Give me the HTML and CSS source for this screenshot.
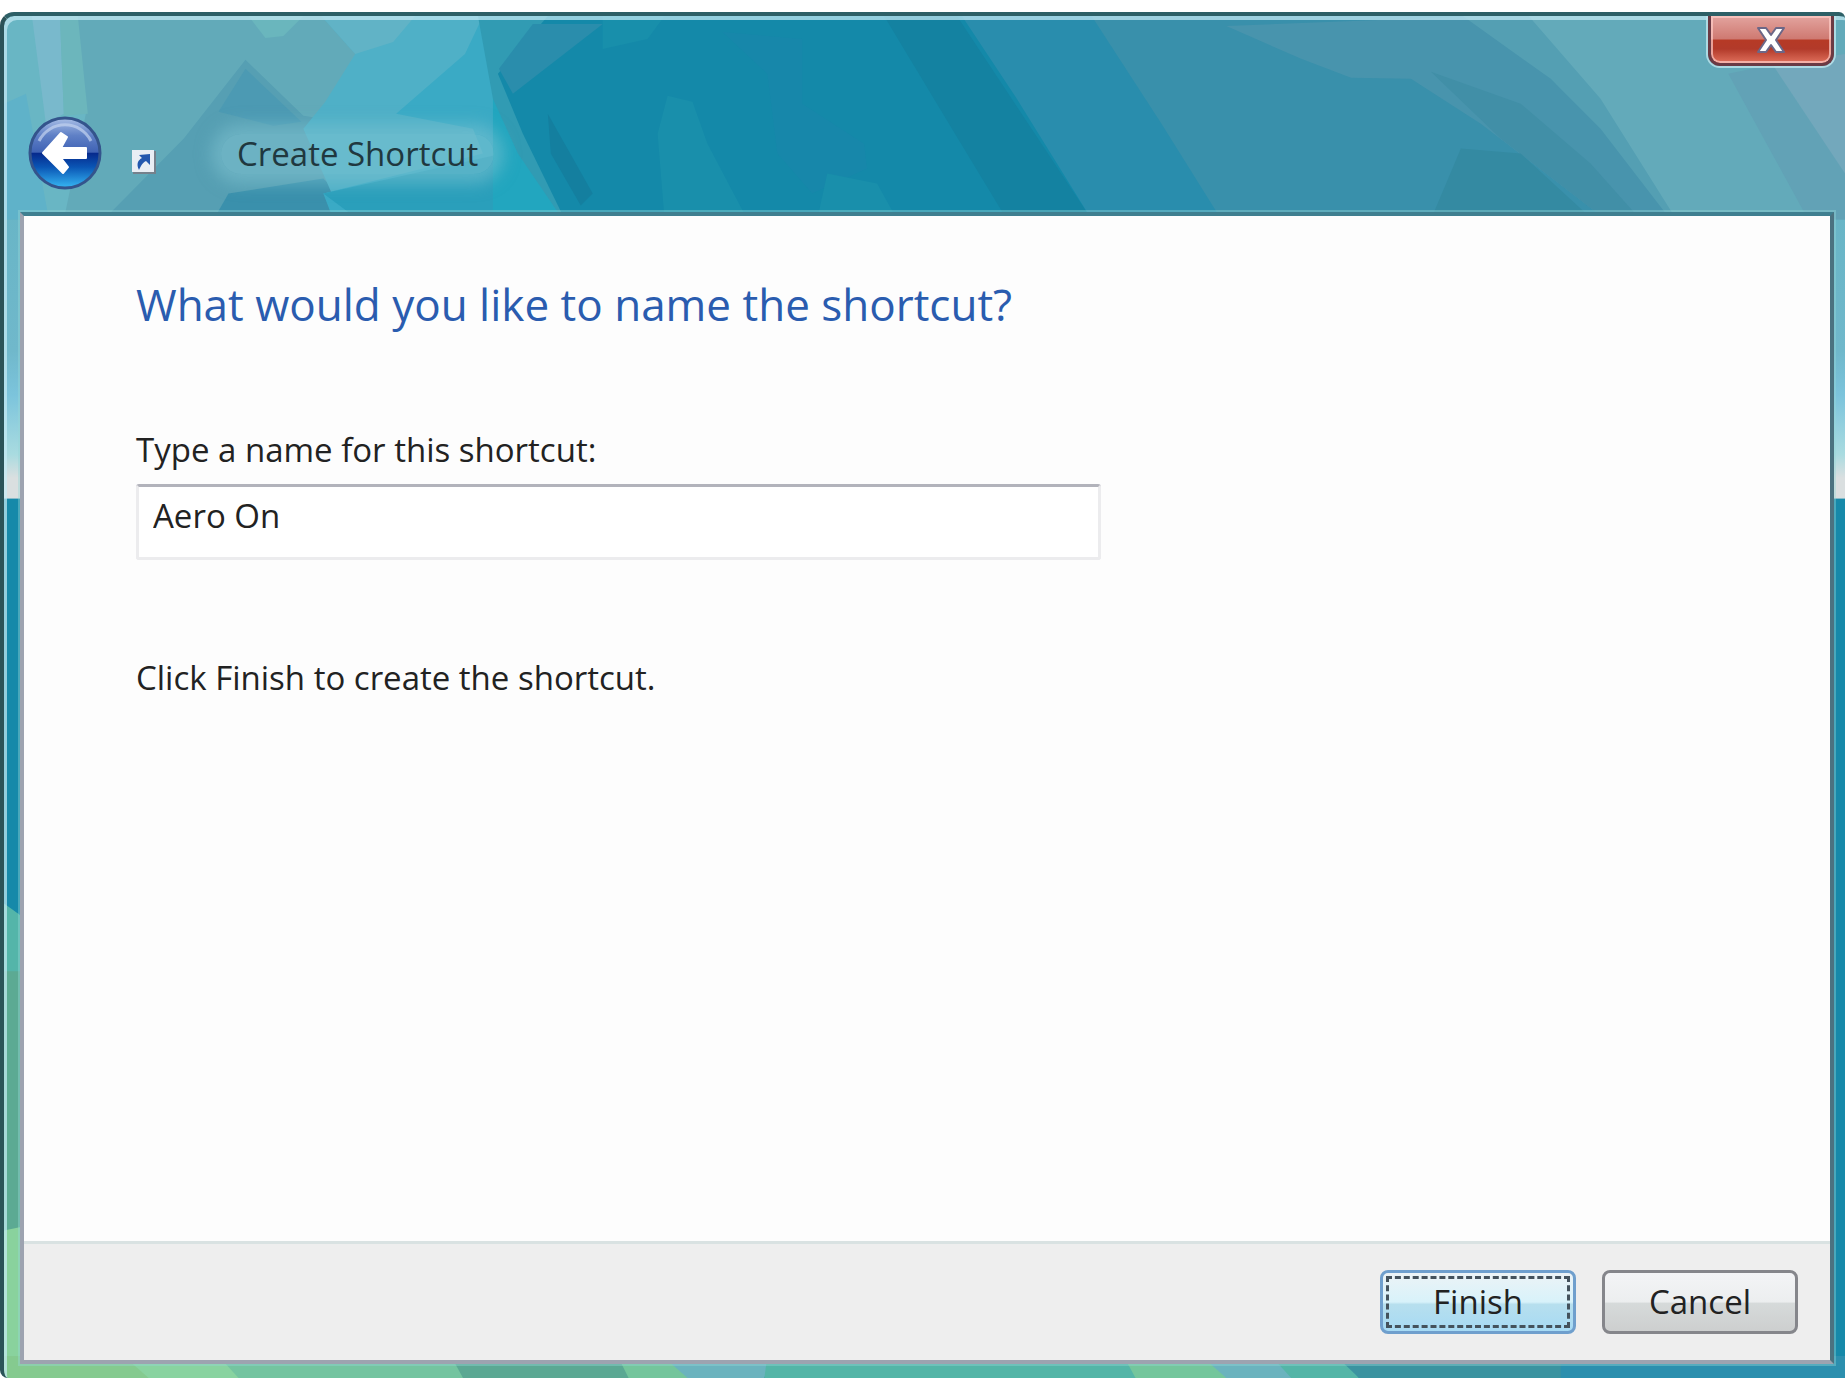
FILE: index.html
```html
<!DOCTYPE html>
<html lang="en">
<head>
    <meta charset="UTF-8">
    <meta name="viewport" content="width=device-width, initial-scale=1.0">
    <title>Create Shortcut</title>
    <link rel="stylesheet" href="styles.css">
</head>
<body>
    <div class="window">
        <!-- wallpaper seen through the glass frame -->
        <svg class="glass" viewBox="0 12 1845 1366" preserveAspectRatio="none" aria-hidden="true">
            <defs>
                <linearGradient id="side" x1="0" y1="0" x2="0" y2="1">
                    <stop offset="0" stop-color="#68b5c6"/>
                    <stop offset="0.5" stop-color="#70b8cb"/>
                    <stop offset="0.65" stop-color="#7cc4dc"/>
                    <stop offset="0.85" stop-color="#a9dbe0"/>
                    <stop offset="0.93" stop-color="#dadfe0"/>
                    <stop offset="1" stop-color="#dadfe0"/>
                </linearGradient>
            </defs>
            <rect x="0" y="12" width="1845" height="1366" fill="#1689a9"/>
            <rect x="0" y="200" width="1845" height="296" fill="url(#side)"/>
            <!-- title bar -->
            <rect x="0" y="12" width="640" height="204" fill="#62aab9"/>
            <polygon points="0,12 60,12 82,110 60,216 0,216" fill="#69b6c4"/>
            <polygon points="28,12 56,12 60,110 42,120" fill="#79b9cc"/>
            <polygon points="56,12 74,12 84,110 60,112" fill="#6cb6bc"/>
            <polygon points="0,100 22,90 45,216 0,216" fill="#5fb2c9"/>
            <polygon points="242,56 300,112 420,130 420,216 100,216 180,135" fill="#569fb3"/>
            <polygon points="242,65 298,118 270,122 215,108" fill="#4c9ab3"/>
            <polygon points="210,216 225,190 320,175 360,216" fill="#3a90ac"/>
            <polygon points="245,12 300,12 280,32 262,34" fill="#6ab6bd"/>
            <polygon points="318,12 480,12 500,216 340,216 300,125 322,98 352,50" fill="#4fb0c7"/>
            <polygon points="318,12 412,12 390,38 352,50" fill="#61b3c6"/>
            <polygon points="462,50 480,12 520,216 330,216 320,190 480,150 470,125 393,110" fill="#3aaac5"/>
            <polygon points="320,190 500,150 540,216 355,216" fill="#2a9fbb"/>
            <polygon points="490,85 530,150 570,216 490,216" fill="#22a6bf"/>
            <polygon points="475,12 640,12 640,216 560,216 515,150 490,95" fill="#319bb3"/>
            <polygon points="545,12 640,12 1200,12 1200,216 562,216 520,130 495,70" fill="#1489a9"/>
            <polygon points="530,20 600,20 510,90 496,65" fill="#2a8dac"/>
            <polygon points="545,110 590,190 578,202 548,150" fill="#147f9f"/>
            <polygon points="600,12 662,12 645,35 600,45" fill="#188fab"/>
            <polygon points="665,92 690,98 705,140 745,216 662,216 655,130" fill="#198fab"/>
            <polygon points="720,28 800,35 800,100 862,140 865,165 810,190 775,150 765,70" fill="#1787aa"/>
            <polygon points="825,170 875,180 895,216 815,216" fill="#198fab"/>
            <polygon points="882,12 955,12 1090,216 1005,216 950,125" fill="#1482a1"/>
            <polygon points="960,12 1300,12 1300,216 1090,216 1015,95" fill="#298dad"/>
            <polygon points="1090,12 1700,12 1700,216 1220,216 1160,120" fill="#3990ab"/>
            <polygon points="1225,22 1480,12 1600,120 1680,216 1605,216 1480,120 1410,75 1350,74 1300,55" fill="#4894ad"/>
            <polygon points="1430,68 1520,100 1590,160 1640,216 1605,216 1500,135" fill="#418fa7"/>
            <polygon points="1460,145 1520,150 1592,216 1430,216" fill="#348aa2"/>
            <polygon points="1462,12 1540,12 1620,95 1690,216 1670,216 1600,125 1550,75" fill="#549fb3"/>
            <polygon points="1528,12 1845,12 1845,216 1676,216 1600,95" fill="#63aaba"/>
            <polygon points="1728,70 1775,60 1845,150 1845,216 1808,216" fill="#62a2b6"/>
            <polygon points="1772,60 1845,50 1845,170" fill="#73a8bc"/>
            <!-- lower left edge -->
            <polygon points="0,902 22,918 22,1378 0,1378" fill="#54b5a9"/>
            <polygon points="0,970 24,970 24,1230 0,1230" fill="#5caa93"/>
            <polygon points="0,1230 24,1225 24,1378 0,1378" fill="#89d29d"/>
            <!-- bottom edge -->
            <rect x="0" y="1356" width="150" height="22" fill="#85ca8f"/>
            <polygon points="120,1356 220,1356 240,1378 145,1378" fill="#89d3a0"/>
            <polygon points="215,1356 450,1356 465,1378 235,1378" fill="#74c4a0"/>
            <polygon points="448,1356 615,1356 630,1378 460,1378" fill="#5ba893"/>
            <polygon points="615,1356 665,1356 690,1378 626,1378" fill="#74c59c"/>
            <polygon points="660,1356 770,1356 762,1378 685,1378" fill="#6bb3be"/>
            <polygon points="765,1356 1125,1356 1135,1378 762,1378" fill="#54b5a7"/>
            <polygon points="1122,1356 1205,1356 1235,1378 1134,1378" fill="#74c69c"/>
            <polygon points="1200,1356 1280,1356 1310,1378 1225,1378" fill="#6bb3be"/>
            <polygon points="1270,1356 1340,1356 1358,1378 1290,1378" fill="#54b5a7"/>
            <polygon points="1335,1356 1620,1356 1620,1378 1358,1378" fill="#3b93a0"/>
            <polygon points="1560,1356 1845,1356 1845,1378 1560,1378" fill="#2c8fae"/>
        </svg>

        <header class="titlebar">
            <button class="back" type="button" aria-label="Back">
                <svg viewBox="0 0 74 74" width="74" height="74">
                    <defs>
                        <linearGradient id="orb" x1="0" y1="0" x2="0" y2="1">
                            <stop offset="0" stop-color="#a9bfe6"/>
                            <stop offset="0.25" stop-color="#5f80c6"/>
                            <stop offset="0.49" stop-color="#3f62b4"/>
                            <stop offset="0.5" stop-color="#06298c"/>
                            <stop offset="0.7" stop-color="#0a55b4"/>
                            <stop offset="1" stop-color="#37b8f4"/>
                        </linearGradient>
                    </defs>
                    <circle cx="37" cy="37" r="35" fill="url(#orb)" stroke="#34548c" stroke-width="3"/>
                    <path d="M11 25a29 29 0 0 1 52 0" fill="none" stroke="#c3d3f0" stroke-width="3" opacity="0.7"/>
                    <path d="M15 37 L33 17 L39 21 L33 32 H58 V42 H33 L40 51 L35 57 Z" fill="#fff" stroke="#fff" stroke-width="2" stroke-linejoin="round"/>
                </svg>
            </button>
            <svg class="shortcut-icon" viewBox="0 0 24 24" width="24" height="24" aria-hidden="true">
                <rect x="1" y="1" width="23" height="23" fill="#75818c"/>
                <rect x="0" y="0" width="22" height="22" fill="#e9eef4"/>
                <path d="M7 20c-3-6-1-10 3-12L7 5l11-1v11l-4-4c-4 2-5 5-7 9z" fill="#2458ae"/>
            </svg>
            <h1>Create Shortcut</h1>
            <button class="close" type="button" aria-label="Close">
                <svg viewBox="0 0 32 30" width="32" height="30">
                    <path d="M3 3h8l5 7 5-7h8l-8 12 8 12h-8l-5-7-5 7H3l8-12z" fill="#fff" stroke="#6c6787" stroke-width="2" stroke-linejoin="round"/>
                </svg>
            </button>
        </header>

        <form class="dialog">
            <main>
                <h2>What would you like to name the shortcut?</h2>
                <label for="name">Type a name for this shortcut:</label>
                <input id="name" type="text" value="Aero On">
                <p>Click Finish to create the shortcut.</p>
            </main>
            <footer>
                <button class="btn default" type="submit"><span>Finish</span></button>
                <button class="btn" type="button"><span>Cancel</span></button>
            </footer>
        </form>
    </div>
</body>
</html>
```
FILE: styles.css
```css
* {
    box-sizing: border-box;
}

body {
    display: flex;
    margin: 0;
    padding: 12px 0 7px;
    min-height: 100vh;
    background-color: #fff;
    font-family: "Open Sans", "Noto Sans", sans-serif;
    font-size: 33px;
    line-height: 40px;
    color: #222;
}

.window {
    position: relative;
    flex: 1;
    display: flex;
    flex-direction: column;
    padding: 0 11px 14px 16px;
    border-top: 4px solid #2d5f66;
    border-left: 4px solid #2b5358;
    border-radius: 14px 6px 0 8px;
    box-shadow: inset 3px 4px 0 rgba(200, 235, 245, 0.7);
    overflow: hidden;
}

.glass {
    position: absolute;
    inset: 0;
    z-index: -1;
    width: 100%;
    height: 100%;
}

.titlebar {
    display: flex;
    align-items: flex-end;
    height: 196px;
    padding: 0 0 22px 8px;
}

.titlebar button {
    padding: 0;
    border: none;
    background: none;
    cursor: pointer;
}

.back svg {
    display: block;
}

.shortcut-icon {
    margin: 0 0 16px 30px;
}

h1 {
    margin: 0 0 16px 65px;
    padding: 0 16px;
    border-radius: 24px;
    background-color: rgba(130, 198, 212, 0.5);
    box-shadow: 0 0 16px 10px rgba(130, 198, 212, 0.5);
    font-size: 33px;
    font-weight: normal;
    line-height: 40px;
    color: #20383f;
}

.titlebar .close {
    display: flex;
    align-items: center;
    justify-content: center;
    align-self: flex-start;
    width: 126px;
    height: 50px;
    margin-left: auto;
    border: 3px solid #6b3a44;
    border-top: none;
    border-radius: 0 0 12px 12px;
    background: linear-gradient(#e3a49f, #cf7a72 48%, #b63a26 52%, #b23a2a 70%, #e0705c);
    box-shadow: inset 0 0 0 2px rgba(255, 205, 200, 0.7), 0 0 0 2px rgba(190, 230, 238, 0.8);
}

.dialog {
    flex: 1;
    display: flex;
    flex-direction: column;
    margin: 0;
    border: 4px solid #9da3b0;
    border-top-color: #3f7f90;
    border-right-color: #4b7280;
    background-color: #fdfdfd;
    box-shadow: 0 0 0 2px rgba(150, 215, 215, 0.4);
}

main {
    flex: 1;
    padding: 60px 112px 48px;
}

h2 {
    margin: 0;
    font-size: 44px;
    font-weight: normal;
    line-height: 56px;
    color: #2a5caf;
}

label {
    display: block;
    margin-top: 98px;
}

input {
    display: block;
    width: 61%;
    height: 76px;
    margin-top: 14px;
    padding: 0 16px 14px 14px;
    border: 3px solid #ececee;
    border-top-color: #b2b3bb;
    border-radius: 3px;
    background-color: #fff;
    font: inherit;
    color: #222;
}

input:focus {
    outline: none;
}

p {
    margin: 98px 0 0;
}

footer {
    display: flex;
    justify-content: flex-end;
    gap: 26px;
    padding: 26px 32px;
    border-top: 3px solid #d9e2e2;
    background-color: #eee;
}

.btn {
    width: 196px;
    height: 64px;
    padding: 3px;
    border: 3px solid #85868b;
    border-radius: 8px;
    background: linear-gradient(#f3f4f6, #eceeef 50%, #d6dada 52%, #cdcfcf);
    font: inherit;
    color: #222;
    cursor: pointer;
}

.btn span {
    display: flex;
    align-items: center;
    justify-content: center;
    height: 100%;
}

.btn.default {
    border-color: #6f9fcd;
    background: linear-gradient(#ecf3f6, #d8f2fa 50%, #b7dfee 54%, #a6daf4);
}

.btn.default span {
    border: 3px dashed #44525c;
}
```
